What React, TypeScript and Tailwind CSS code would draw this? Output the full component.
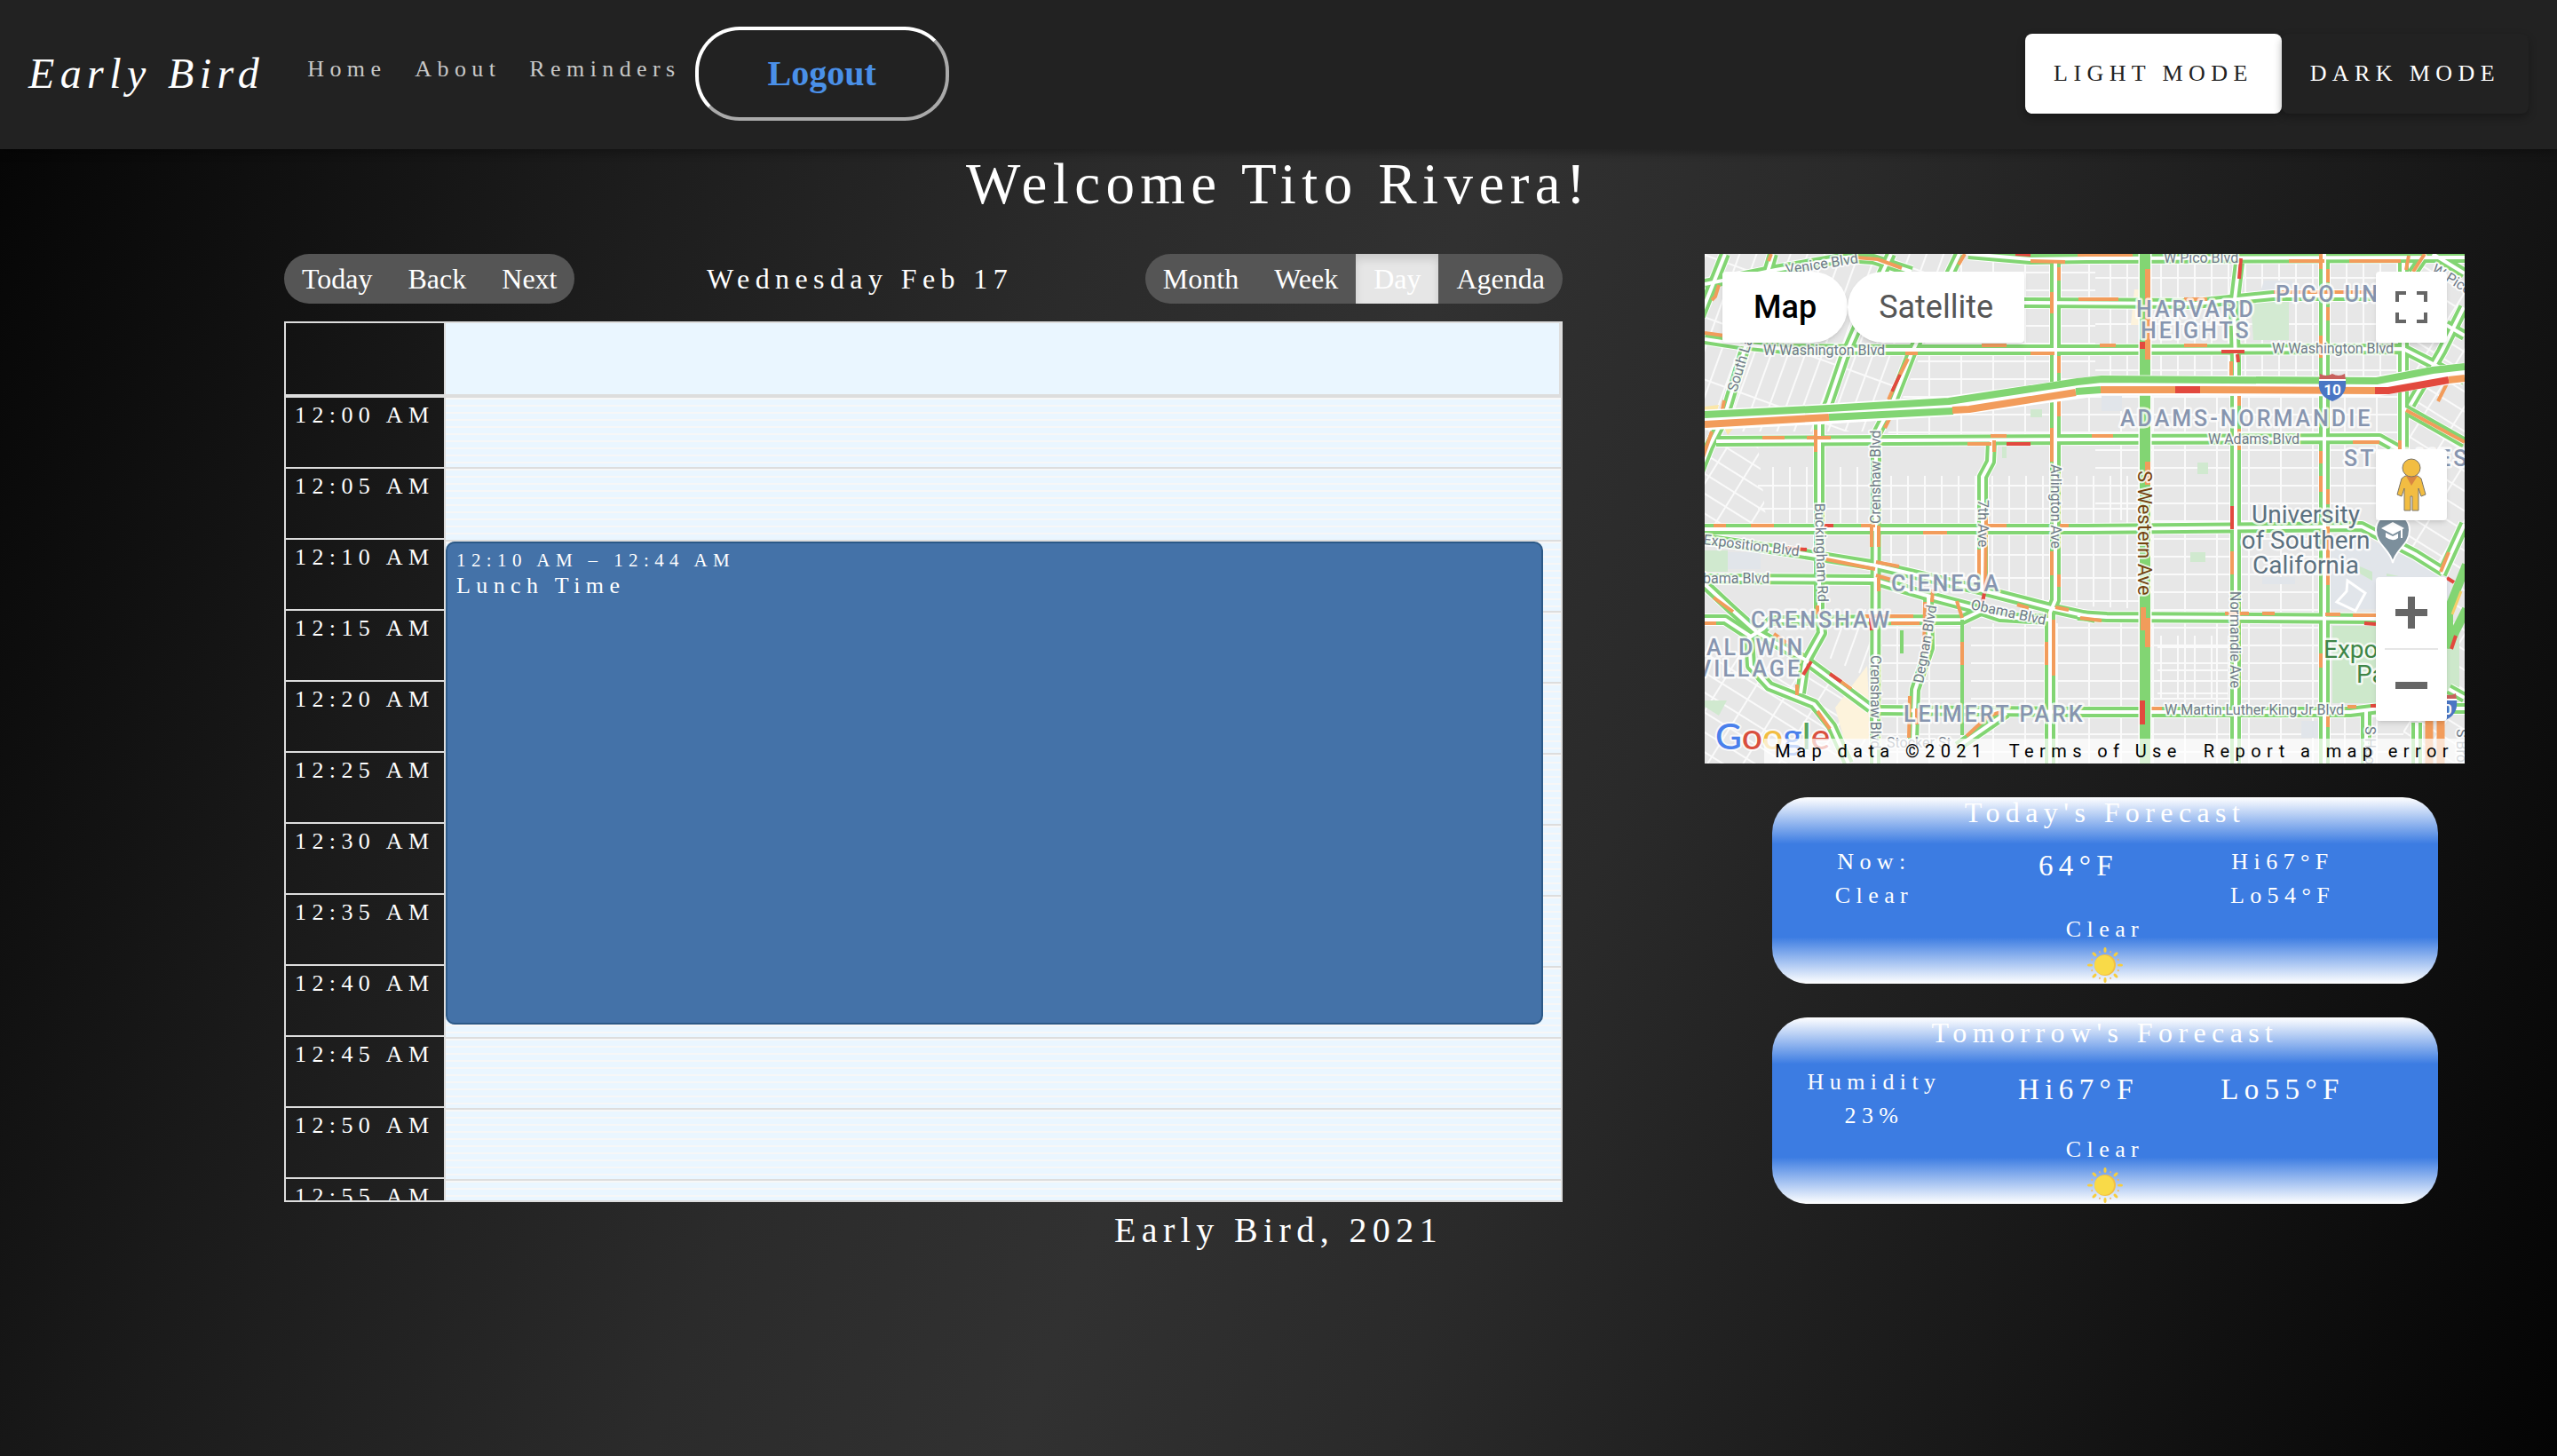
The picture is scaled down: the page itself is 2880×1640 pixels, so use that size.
import React from "react";

const GREEN = "#82d573";
const ORANGE = "#f29c5b";
const RED = "#e2493e";

const roads: string[] = [
  "0,96 40,102 90,107 203,108 430,108 787,107 836,132 856,142",
  "13,211 430,209 760,208 785,222",
  "0,310 430,310 740,307 800,338 832,358",
  "0,321 107,337 193,351 313,379 390,399 440,410",
  "0,366 190,367 247,384 300,398 333,409 387,412",
  "0,412 23,412 52,431 66,422 75,413 290,412 315,400",
  "420,407 453,409 756,411",
  "193,514 430,516 727,516 760,512 856,512",
  "0,372 30,400 60,427 113,457 187,512",
  "50,431 52,464 73,487 123,507 143,532 162,574",
  "297,0 367,6 430,5 856,4",
  "0,34 80,18 160,4 190,6 233,20",
  "355,55 553,56 640,47 753,47",
  "602,10 596,60 598,120 598,574",
  "698,0 698,574",
  "787,10 787,225",
  "395,10 395,390 389,404 389,574",
  "287,0 233,112 210,171 193,204 192,574",
  "210,0 170,87 157,117 140,167 129,191 129,400 132,427 113,461 108,495",
  "77,0 47,101 22,184 5,217 -6,245",
  "23,0 -5,70",
  "323,211 322,234 313,251 313,379",
  "252,384 253,444 237,491 235,548",
  "285,555 340,517",
  "855,60 830,110 795,170",
  "812,0 797,22",
  "820,0 856,22",
  "787,174 856,213",
  "835,80 856,92",
  "856,304 830,361",
  "745,515 745,574",
  "802,528 802,574",
  "838,490 856,500",
];

const traffic: [string, string][] = [
  [ORANGE, "0,89 22,92"],
  [ORANGE, "312,103 340,103"],
  [ORANGE, "226,112 240,112"],
  [ORANGE, "367,112 394,112"],
  [ORANGE, "445,103 463,103"],
  [ORANGE, "540,103 566,103"],
  [RED, "582,110 608,110"],
  [ORANGE, "65,207 90,207"],
  [ORANGE, "115,207 142,207"],
  [ORANGE, "296,214 323,214"],
  [RED, "340,214 367,214"],
  [ORANGE, "322,205 340,205"],
  [ORANGE, "436,205 460,205"],
  [ORANGE, "730,212 760,212"],
  [ORANGE, "10,306 24,306"],
  [ORANGE, "52,306 78,306"],
  [RED, "134,306 145,306"],
  [ORANGE, "176,306 192,306"],
  [ORANGE, "246,314 273,314"],
  [ORANGE, "318,306 340,306"],
  [ORANGE, "400,306 410,306"],
  [RED, "91,331 115,333"],
  [ORANGE, "137,344 192,355"],
  [ORANGE, "193,347 219,352"],
  [ORANGE, "352,395 365,399"],
  [ORANGE, "395,398 410,401"],
  [ORANGE, "193,362 210,367"],
  [ORANGE, "0,416 13,416"],
  [ORANGE, "180,408 235,408"],
  [ORANGE, "210,416 242,416"],
  [ORANGE, "423,410 447,413"],
  [ORANGE, "586,405 613,405"],
  [ORANGE, "628,405 642,405"],
  [ORANGE, "699,406 716,406"],
  [ORANGE, "730,407 756,407"],
  [RED, "743,416 756,417"],
  [ORANGE, "10,387 32,403"],
  [ORANGE, "78,428 92,438"],
  [RED, "141,473 154,482"],
  [ORANGE, "154,482 165,490"],
  [RED, "111,474 120,459"],
  [ORANGE, "127,515 141,535"],
  [RED, "350,0 367,1"],
  [ORANGE, "367,8 406,9"],
  [ORANGE, "420,1 482,1"],
  [ORANGE, "658,8 698,8"],
  [ORANGE, "726,8 784,8"],
  [ORANGE, "170,4 195,6 222,16"],
  [ORANGE, "421,51 466,51"],
  [ORANGE, "540,51 566,51"],
  [ORANGE, "641,43 760,43"],
  [RED, "604,5 602,28"],
  [ORANGE, "593,121 593,137"],
  [RED, "600,113 601,122"],
  [ORANGE, "602,155 602,171"],
  [ORANGE, "602,197 602,221"],
  [RED, "594,284 594,310"],
  [ORANGE, "594,335 594,361"],
  [ORANGE, "694,0 694,17"],
  [ORANGE, "702,17 702,32"],
  [ORANGE, "702,60 702,75"],
  [ORANGE, "694,92 694,117"],
  [ORANGE, "694,222 694,236"],
  [ORANGE, "694,250 694,268"],
  [ORANGE, "702,265 702,282"],
  [ORANGE, "702,307 702,373"],
  [ORANGE, "694,450 694,466"],
  [ORANGE, "702,520 702,533"],
  [ORANGE, "783,210 783,220"],
  [ORANGE, "399,15 399,30"],
  [ORANGE, "391,43 391,67"],
  [ORANGE, "399,115 399,134"],
  [ORANGE, "399,163 399,183"],
  [ORANGE, "391,196 391,234"],
  [ORANGE, "391,335 391,362"],
  [ORANGE, "399,361 399,375"],
  [ORANGE, "385,437 385,463"],
  [ORANGE, "393,412 393,475"],
  [ORANGE, "293,0 286,12"],
  [ORANGE, "229,118 220,136"],
  [RED, "220,136 211,155"],
  [ORANGE, "211,155 207,164"],
  [ORANGE, "209,184 203,196"],
  [ORANGE, "188,306 188,330"],
  [ORANGE, "196,306 196,330"],
  [ORANGE, "196,365 196,380"],
  [RED, "187,410 188,424"],
  [ORANGE, "125,198 125,223"],
  [ORANGE, "127,396 127,406"],
  [ORANGE, "104,485 104,497"],
  [ORANGE, "75,0 72,8"],
  [ORANGE, "22,165 19,180"],
  [ORANGE, "8,200 -4,235"],
  [ORANGE, "16,35 12,48 8,52"],
  [ORANGE, "326,210 326,223"],
  [ORANGE, "309,333 309,361"],
  [ORANGE, "317,296 316,382"],
  [RED, "315,382 313,392"],
  [ORANGE, "257,378 256,392"],
  [ORANGE, "248,392 247,450"],
  [ORANGE, "231,498 230,545"],
  [ORANGE, "239,512 239,530"],
  [ORANGE, "284,391 290,410"],
  [ORANGE, "295,543 320,520 334,516"],
  [ORANGE, "503,512 515,512"],
  [ORANGE, "724,510 734,510"],
  [RED, "750,509 760,509"],
  [ORANGE, "824,134 838,142 826,166"],
  [ORANGE, "790,176 856,212"],
  [ORANGE, "838,336 829,358"],
  [RED, "836,365 844,370"],
  [ORANGE, "793,2 790,18"],
  [ORANGE, "811,0 798,20"],
];

type MapLabel = { text: string; x: number; y: number; r?: number };

const streetLabels: MapLabel[] = [
  { text: "W Washington Blvd", x: 66, y: 114 },
  { text: "W Washington Blvd", x: 639, y: 112 },
  { text: "W Pico Blvd", x: 517, y: 10 },
  { text: "W Pico Blvd", x: 818, y: 20, r: 32 },
  { text: "W Adams Blvd", x: 567, y: 214 },
  { text: "Venice Blvd", x: 92, y: 23, r: -9 },
  { text: "South La Brea", x: 36, y: 156, r: -73 },
  { text: "Crenshaw Blvd", x: 198, y: 304, r: -90 },
  { text: "Arlington Ave", x: 390, y: 237, r: 90 },
  { text: "7th Ave", x: 308, y: 277, r: 90 },
  { text: "Buckingham Rd", x: 124, y: 281, r: 88 },
  { text: "Normandie Ave", x: 592, y: 380, r: 90 },
  { text: "Crenshaw Blvd", x: 187, y: 452, r: 90 },
  { text: "Degnan Blvd", x: 246, y: 484, r: -80 },
  { text: "Exposition Blvd", x: -2, y: 327, r: 7 },
  { text: "Obama Blvd", x: 299, y: 400, r: 12 },
  { text: "bama Blvd", x: -2, y: 371 },
  { text: "W Martin Luther King Jr Blvd", x: 518, y: 519 },
  { text: "Stocker St", x: 205, y: 556 },
  { text: "S Hoover", x: 744, y: 532, r: 90 },
  { text: "S Broadway", x: 847, y: 535, r: 90 },
];

const areaLabels: MapLabel[] = [
  { text: "HARVARD", x: 486, y: 71 },
  { text: "HEIGHTS", x: 491, y: 95 },
  { text: "PICO UNION", x: 643, y: 54 },
  { text: "ADAMS-NORMANDIE", x: 468, y: 194 },
  { text: "ST JAMES", x: 720, y: 239 },
  { text: "CIENEGA", x: 210, y: 380 },
  { text: "CRENSHAW", x: 52, y: 421 },
  { text: "ALDWIN", x: 2, y: 452 },
  { text: "VILLAGE", x: -9, y: 476 },
  { text: "LEIMERT PARK", x: 224, y: 527 },
];

function Shield({ x, y }: { x: number; y: number }) {
  return (
    <g transform={`translate(${x} ${y})`}>
      <path d="M-14 -15 Q-7 -11 0 -15 Q7 -11 14 -15 L15 -8 H-15 Z" fill="#c8605c" />
      <path d="M-15 -8 H15" stroke="#fff" strokeWidth="2" />
      <path d="M-15 -7 H15 Q17 10 0 16 Q-17 10 -15 -7 Z" fill="#4a76c4" />
      <text x="0" y="9" textAnchor="middle" fontSize="17" fontWeight="700" fill="#fff">10</text>
    </g>
  );
}

function TrafficMap() {
  return (
    <svg
      viewBox="0 0 856 574"
      preserveAspectRatio="xMidYMid slice"
      className="block h-full w-full tracking-normal"
      fontFamily="Roboto, sans-serif"
      role="img"
      aria-label="Traffic map"
    >
      <defs>
        <pattern id="grid" width="19" height="26" patternUnits="userSpaceOnUse">
          <path d="M1 0V26M0 1H19" stroke="#fafafa" strokeWidth="2" fill="none" />
        </pattern>
        <pattern id="wide" width="36" height="20" patternUnits="userSpaceOnUse">
          <path d="M1 0V20M0 1H36" stroke="#fafafa" strokeWidth="2" fill="none" />
        </pattern>
        <pattern id="slant" width="18" height="66" patternUnits="userSpaceOnUse" patternTransform="rotate(20)">
          <path d="M1 0V66M0 1H18" stroke="#fafafa" strokeWidth="2" fill="none" />
        </pattern>
        <pattern id="diag" width="34" height="19" patternUnits="userSpaceOnUse" patternTransform="rotate(32)">
          <path d="M1 0V19M0 1H34" stroke="#fafafa" strokeWidth="2" fill="none" />
        </pattern>
      </defs>
      <rect width="856" height="574" fill="#e7e7e7" />
      <path d="M0 0H290L195 200H0Z" fill="url(#slant)" />
      <path d="M290 0H440V205H205Z" fill="url(#wide)" />
      <path d="M0 215H60L70 306H0Z" fill="url(#diag)" />
      <path d="M60 240H190V306H60Z" fill="url(#grid)" />
      <path d="M197 250H496V400L390 395L197 350Z" fill="url(#grid)" />
      <path d="M300 416H496V574H300Z" fill="url(#wide)" />
      <path d="M0 440L120 470L190 520V574H0Z" fill="url(#diag)" />
      <path d="M130 400H190V480L130 450Z" fill="url(#slant)" />
      <path d="M200 416H290V574H200Z" fill="url(#wide)" />
      <path d="M440 0H787V140H440Z" fill="url(#grid)" />
      <path d="M440 160H787V300H440Z" fill="url(#wide)" />
      <path d="M496 300H698V574H496Z" fill="url(#wide)" />
      <path d="M510 430H590V500H510Z" fill="url(#grid)" />
      <path d="M787 0H856V574H787Z" fill="url(#diag)" />
      <path d="M698 520H787V574H698Z" fill="url(#wide)" />

      <path d="M615 54L658 50V97H618Z" fill="#d3ead2" />
      <path d="M707 419H850V506H707Z" fill="#cde8cb" />
      <path d="M0 334H26V358H0Z" fill="#d0e9cf" />
      <path d="M0 503H25L16 520L0 510Z" fill="#d0e9cf" />
      <path d="M555 235H567V248H555ZM547 336H564V347H547ZM367 175H380V184H367ZM335 217H340V230H335Z" fill="#d0e9cf" />
      <path d="M703 318H740L840 364V400H703Z" fill="#e1e5ea" />
      <path d="M26 336H63V355H26ZM630 30H662V46H625ZM447 160H470V177H447ZM628 364H665V372H628ZM672 526H691V545H672Z" fill="#e1e5ea" />
      <path d="M723 380L712 392L733 402L744 382L724 368Z" fill="none" stroke="#fff" strokeWidth="3" />
      <path d="M738 352L752 358V368L738 360ZM768 360L782 363H768Z" fill="#cde8cb" />
      <path d="M183 464L147 511L157 547H187Z" fill="#fdf3dc" />
      <path d="M484 40H490V80H480Z" fill="#fdf3dc" />
      <path d="M0 172L16 170L12 184H0ZM22 196L36 192L26 204Z" fill="#fbe7a8" />

      {roads.map((p) => (
        <polyline key={`c${p}`} points={p} fill="none" stroke="#fff" strokeWidth="14" strokeLinejoin="round" />
      ))}
      {roads.map((p) => (
        <polyline key={`g${p}`} points={p} fill="none" stroke={GREEN} strokeWidth="12" strokeLinejoin="round" />
      ))}
      {roads.map((p) => (
        <polyline key={`w${p}`} points={p} fill="none" stroke="#fff" strokeWidth="4" strokeLinejoin="round" />
      ))}
      <path d="M290 412V542M222 424V450" stroke={GREEN} strokeWidth="4" />
      <path d="M290 437V463" stroke={ORANGE} strokeWidth="4" />
      {traffic.map(([c, p]) => (
        <polyline key={p} points={p} fill="none" stroke={c} strokeWidth="4" />
      ))}

      <path d="M496 0V574" stroke="#fff" strokeWidth="15" />
      <path d="M496 0V574" stroke={GREEN} strokeWidth="12" />
      <path d="M499 17V119M499 234V260M494 398V424M499 410V443" stroke={ORANGE} strokeWidth="6" />
      <path d="M493 99V107M493 503V530" stroke={RED} strokeWidth="6" />

      <g fill="none" strokeLinejoin="round">
        <path d="M0 187L140 180L280 171L447 148L757 149L820 138L856 134" stroke="#fff" strokeWidth="23" />
        <path d="M0 181L140 174L275 166L420 144L447 141L757 143L820 131L856 127" stroke={GREEN} strokeWidth="8" />
        <path d="M0 192L140 184" stroke={ORANGE} strokeWidth="8" />
        <path d="M140 184L280 177" stroke={GREEN} strokeWidth="8" />
        <path d="M279 176L298 175L418 156" stroke={ORANGE} strokeWidth="8" />
        <path d="M418 155L446 153" stroke={GREEN} strokeWidth="8" />
        <path d="M446 153H530" stroke={ORANGE} strokeWidth="8" />
        <path d="M530 153H558" stroke={RED} strokeWidth="8" />
        <path d="M558 153L755 154" stroke={ORANGE} strokeWidth="8" />
        <path d="M755 154H770L838 142" stroke={RED} strokeWidth="8" />
        <path d="M838 142L856 140" stroke={ORANGE} strokeWidth="8" />
        <path d="M858 350L838 400V440L858 400" stroke={GREEN} strokeWidth="10" />
        <path d="M852 380L842 406" stroke="#f4cf6a" strokeWidth="3" />
        <path d="M841 445L846 430" stroke={RED} strokeWidth="4" />
        <path d="M816 526V574M829 526V574" stroke={ORANGE} strokeWidth="9" />
      </g>

      <Shield x={707} y={150} />
      <Shield x={832} y={510} />

      <g transform="translate(775 312)">
        <path d="M0 36C-3 20 -19 16 -19 -1A19 19 0 0 1 19 -1C19 16 3 20 0 36Z" fill="#7c8f9c" stroke="#fff" strokeWidth="2" />
        <path d="M-13 -3L0 -10L13 -3L0 4ZM-8 2V7Q0 13 6 8V3L0 6ZM9 -2H11V8H9Z" fill="#fff" />
      </g>

      <g fontSize="16" fill="#6f7b88" stroke="#fff" strokeWidth="4" strokeOpacity="0.8" strokeLinejoin="round" paintOrder="stroke">
        {streetLabels.map((l) => (
          <text key={`${l.text}${l.x}`} transform={`translate(${l.x} ${l.y}) rotate(${l.r ?? 0})`}>
            {l.text}
          </text>
        ))}
        <text transform="translate(488 244) rotate(90)" fontSize="22" fill="#74430f">S Western Ave</text>
      </g>
      <g fontSize="25" fontWeight="500" letterSpacing="3" fill="#8795af" stroke="#fff" strokeWidth="5" strokeOpacity="0.8" strokeLinejoin="round" paintOrder="stroke">
        {areaLabels.map((l) => (
          <text key={l.text} x={l.x} y={l.y}>
            {l.text}
          </text>
        ))}
      </g>
      <g fontSize="28" stroke="#fff" strokeWidth="5" strokeOpacity="0.8" strokeLinejoin="round" paintOrder="stroke">
        <g fill="#5c7180" textAnchor="middle">
          <text x="677" y="303">University</text>
          <text x="677" y="332">of Southern</text>
          <text x="677" y="360">California</text>
        </g>
        <g fill="#3f8648">
          <text x="697" y="455">Exposition</text>
          <text x="734" y="483">Park</text>
        </g>
      </g>
      <text x="12" y="558" fontSize="41" fontFamily="Lato, sans-serif" fontWeight="500" stroke="#fff" strokeWidth="4" strokeOpacity="0.8" strokeLinejoin="round" paintOrder="stroke">
        <tspan fill="#4a80ec">G</tspan>
        <tspan fill="#d9503f">o</tspan>
        <tspan fill="#f2bd42">o</tspan>
        <tspan fill="#4a80ec">g</tspan>
        <tspan fill="#58a55c">l</tspan>
        <tspan fill="#d9503f">e</tspan>
      </text>
    </svg>
  );
}

function MapPanel() {
  return (
    <section className="relative h-[574px] overflow-hidden font-[Roboto,sans-serif]">
      <TrafficMap />
      <div className="absolute top-5 left-5 flex text-[36px] leading-[80px] tracking-normal">
        <button type="button" className="rounded-l-sm rounded-r-[40px] bg-white px-[35px] font-medium text-black shadow-md">Map</button>
        <button type="button" className="rounded-l-[40px] rounded-r-sm bg-white px-[35px] text-[#565656] shadow-md">Satellite</button>
      </div>
      <button type="button" aria-label="Toggle fullscreen view" className="absolute top-5 right-5 flex size-20 items-center justify-center rounded-sm bg-white shadow-md">
        <svg viewBox="0 0 36 36" className="size-9" fill="none" stroke="#666" strokeWidth="4">
          <path d="M2 12V2H12M24 2H34V12M34 24V34H24M12 34H2V24" />
        </svg>
      </button>
      <button type="button" aria-label="Street View" className="absolute top-[220px] right-5 flex size-20 items-center justify-center rounded-sm bg-white shadow-md">
        <svg viewBox="0 0 34 60" className="h-[60px]" stroke="#7a7468" strokeWidth="1">
          <path d="M10 20H24L28 23L33 41L28 43L25 34V59H18V43H16V59H9V34L6 43L1 41L6 23Z" fill="#f2bd42" />
          <path d="M11 20H24L17 31Z" fill="#d98642" stroke="none" />
          <circle cx="17" cy="11" r="10" fill="#f2bd42" />
        </svg>
      </button>
      <div className="absolute right-5 bottom-12 flex w-20 flex-col rounded-sm bg-white px-[10px] shadow-md">
        <button type="button" aria-label="Zoom in" className="flex h-20 items-center justify-center">
          <svg viewBox="0 0 36 36" className="size-9"><path d="M14 0H22V14H36V22H22V36H14V22H0V14H14Z" fill="#666" /></svg>
        </button>
        <div className="h-[2px] bg-[#e6e6e6]" />
        <button type="button" aria-label="Zoom out" className="flex h-20 items-center justify-center">
          <svg viewBox="0 0 36 36" className="size-9"><path d="M0 14H36V22H0Z" fill="#666" /></svg>
        </button>
      </div>
      <div className="absolute right-0 bottom-0 flex bg-white/70 text-[20px] leading-7 whitespace-nowrap text-black">
        <span className="px-3">Map data ©2021</span>
        <a href="#terms" className="px-3">Terms of Use</a>
        <a href="#report" className="px-3">Report a map error</a>
      </div>
    </section>
  );
}

function Sun() {
  const rays = Array.from({ length: 16 }, (_, i) => i);
  return (
    <svg viewBox="0 0 42 42" className="mx-auto block size-[42px]" aria-label="Sunny" role="img">
      {rays.map((i) =>
        i % 2 === 0 ? (
          <ellipse key={i} cx="21" cy="4" rx="1.6" ry="3" fill="#f6cd3f" transform={`rotate(${i * 22.5} 21 21)`} />
        ) : (
          <circle key={i} cx="21" cy="5" r="1" fill="#f3b65a" transform={`rotate(${i * 22.5} 21 21)`} />
        ),
      )}
      <circle cx="21" cy="21" r="12" fill="#f3bf43" />
      <circle cx="20" cy="21" r="11" fill="#f9da48" />
    </svg>
  );
}

function ForecastCard({ title, children }: { title: string; children: React.ReactNode }) {
  return (
    <section className="mr-[30px] ml-[76px] overflow-hidden rounded-[40px] bg-[linear-gradient(#fff,#3c7ce2_25%,#3c7ce2_75%,#fff)] text-center text-[26px] leading-[38px]">
      <h2 className="text-[32px] leading-[34px]">{title}</h2>
      <div className="mt-5 grid grid-cols-3 pr-[60px]">{children}</div>
      <p>Clear</p>
      <Sun />
    </section>
  );
}

const times = ["12:00", "12:05", "12:10", "12:15", "12:20", "12:25", "12:30", "12:35", "12:40", "12:45", "12:50", "12:55"];

function Calendar() {
  return (
    <section>
      <div className="flex items-center text-[32px] leading-[56px]">
        <div className="flex overflow-hidden rounded-full bg-[#555] tracking-normal">
          <button type="button" className="px-5">Today</button>
          <button type="button" className="px-5">Back</button>
          <button type="button" className="px-5">Next</button>
        </div>
        <span className="flex-1 text-center">Wednesday Feb 17</span>
        <div className="flex overflow-hidden rounded-full bg-[#555] tracking-normal">
          <button type="button" className="px-5">Month</button>
          <button type="button" className="px-5">Week</button>
          <button type="button" aria-pressed="true" className="bg-[#e6e6e6] px-5 shadow-[inset_0_6px_10px_rgba(0,0,0,0.125)]">Day</button>
          <button type="button" className="px-5">Agenda</button>
        </div>
      </div>

      <div className="mt-5 flex h-[992px] flex-col overflow-hidden border-2 border-[#ddd]">
        <div className="flex h-[84px] shrink-0 border-b-4 border-[#ddd]">
          <div className="w-[180px] border-r-2 border-[#ddd]" />
          <div className="flex-1 border-r-2 border-[#ddd] bg-[#eaf6ff]" />
        </div>
        <div className="flex min-h-0 flex-1 items-start overflow-hidden">
          <div className="w-[180px] border-r-2 border-[#ddd]">
            {times.map((t) => (
              <div key={t} className="h-20 border-b-2 border-[#ddd] px-[10px] text-[26px] leading-10 whitespace-nowrap">
                {t} AM
              </div>
            ))}
          </div>
          <div className="relative flex-1">
            {times.map((t) => (
              <div key={t} className="h-20 border-b-2 border-[#ddd] bg-[#eaf6ff] bg-[repeating-linear-gradient(#f7f7f7_0_2px,#eaf6ff_2px_8px)] nth-2:h-[82px]" />
            ))}
            <article className="absolute top-[162px] right-5 left-0 h-[544px] rounded-[10px] border-2 border-[#2c5987] bg-[#4472a8] px-[10px] py-1">
              <p className="text-[21px] leading-[30px]">12:10 AM – 12:44 AM</p>
              <h3 className="text-[26px] leading-7">Lunch Time</h3>
            </article>
          </div>
        </div>
      </div>
    </section>
  );
}

export default function App() {
  return (
    <div className="min-h-screen bg-[linear-gradient(110deg,#040404,#1a1a1a_20%,#2b2b2b_38%,#313131_50%,#2a2a2a_62%,#191919_80%,#040404)] font-['Liberation_Serif',serif] tracking-[0.4rem] text-white">
      <header className="flex h-[168px] items-center justify-between bg-[#222] px-8 pb-[2px] shadow-[0_4px_10px_rgba(0,0,0,0.3)]">
        <div className="flex items-center">
          <a href="#home" className="mr-8 text-[48px] italic">Early Bird</a>
          <nav className="mb-3 flex text-[26px] text-[#c8c8c8]">
            <a href="#home" className="px-4">Home</a>
            <a href="#about" className="px-4">About</a>
            <a href="#reminders" className="px-4">Reminders</a>
          </nav>
          <button type="button" className="h-[106px] w-[286px] rounded-[50px] border-4 border-t-white border-r-[#aaa] border-b-[#aaa] border-l-white text-[40px] font-bold tracking-normal text-[#4a90e8]">
            Logout
          </button>
        </div>
        <div className="flex text-[26px] leading-[90px]">
          <button type="button" className="rounded-lg bg-white px-8 text-[#222] shadow-[0_4px_10px_rgba(0,0,0,0.3)]">LIGHT MODE</button>
          <button type="button" className="rounded-lg bg-[#222] px-8 shadow-[0_4px_10px_rgba(0,0,0,0.3)]">DARK MODE</button>
        </div>
      </header>

      <h1 className="mb-10 text-center text-[65px] leading-[78px]">Welcome Tito Rivera!</h1>

      <main className="grid grid-cols-[180fr_107fr] gap-40 pr-[104px] pl-80">
        <Calendar />
        <div className="flex flex-col gap-[38px]">
          <MapPanel />
          <ForecastCard title="Today's Forecast">
            <div>
              <p>Now:</p>
              <p>Clear</p>
            </div>
            <p className="text-[33px] leading-[46px]">64°F</p>
            <div>
              <p>Hi67°F</p>
              <p>Lo54°F</p>
            </div>
          </ForecastCard>
          <ForecastCard title="Tomorrow's Forecast">
            <div>
              <p>Humidity</p>
              <p>23%</p>
            </div>
            <p className="text-[33px] leading-[54px]">Hi67°F</p>
            <p className="text-[33px] leading-[54px]">Lo55°F</p>
          </ForecastCard>
        </div>
      </main>

      <footer className="text-center text-[40px] leading-[60px]">Early Bird, 2021</footer>
    </div>
  );
}
